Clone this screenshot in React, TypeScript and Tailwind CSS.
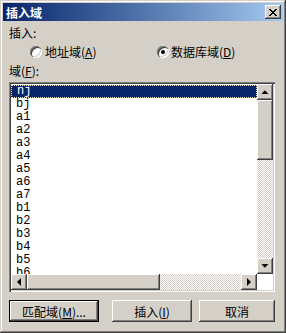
import React from "react";

const raised =
  "shadow-[inset_-1px_-1px_#404040,inset_1px_1px_#ffffff,inset_-2px_-2px_#808080,inset_2px_2px_#d4d0c8]";
const checker =
  "bg-[image:repeating-conic-gradient(#ffffff_0%_25%,#d4d0c8_0%_50%)] bg-[length:2px_2px]";

const items = ["nj", "bj", "a1", "a2", "a3", "a4", "a5", "a6", "a7", "b1", "b2", "b3", "b4", "b5", "b6"];

function Arrow({ dir }: { dir: "up" | "down" | "left" | "right" }) {
  const pts = {
    up: "0.5,4 3.5,0.5 4,0.5 7.5,4",
    down: "0.5,0 7.5,0 4,3.5 3.5,3.5",
    left: "4,0 4,8 0,4",
    right: "0,0 4,4 0,8",
  }[dir];
  const vertical = dir === "up" || dir === "down";
  return (
    <div className={`flex h-[16px] w-[16px] shrink-0 items-center justify-center bg-[#d4d0c8] ${raised}`}>
      <svg width={vertical ? 8 : 4} height={vertical ? 4 : 8} viewBox={vertical ? "0 0 8 4" : "0 0 4 8"}>
        <polygon points={pts} fill="#000" />
      </svg>
    </div>
  );
}

function Radio({ checked }: { checked?: boolean }) {
  return (
    <span className="relative flex h-[12px] w-[12px] shrink-0 items-center justify-center rounded-full bg-white shadow-[inset_1px_1px_#808080,inset_2px_2px_#404040,inset_-1px_-1px_#ffffff,inset_-2px_-2px_#d4d0c8]">
      {checked && <span className="h-[4px] w-[4px] rounded-full bg-black" />}
    </span>
  );
}

function Key({ k }: { k: string }) {
  return (
    <span>
      (<span className="underline underline-offset-1">{k}</span>)
    </span>
  );
}

function Button({ children, def, w }: { children: React.ReactNode; def?: boolean; w: string }) {
  return (
    <div className={`${w} h-[22px] ${def ? "border border-black" : ""}`}>
      <div className={`flex h-full w-full items-center justify-center bg-[#d4d0c8] ${raised}`}>{children}</div>
    </div>
  );
}

export default function App() {
  return (
    <div
      className="flex h-[333px] w-[286px] flex-col bg-[#d4d0c8] p-[3px] text-[12px] leading-[13px] text-black shadow-[inset_-1px_-1px_#404040,inset_1px_1px_#d4d0c8,inset_-2px_-2px_#808080,inset_2px_2px_#ffffff]"
      style={{ fontFamily: '"Noto Sans CJK SC", "Liberation Sans", sans-serif' }}
    >
      <div className="flex h-[18px] items-center justify-between bg-gradient-to-r from-[#0a246a] to-[#a6caf0] pl-[3px] pr-[2px]">
        <span className="text-[12px] font-bold text-white">插入域</span>
        <div className={`flex h-[14px] w-[16px] items-center justify-center bg-[#d4d0c8] ${raised}`}>
          <svg width="8" height="7" viewBox="0 0 8 7">
            <path d="M0 0h2v1h1v1h2V1h1V0h2v1H7v1H6v1H5v1h1v1h1v1h1v1H6V6H5V5H3v1H2v1H0V6h1V5h1V4h1V3H2V2H1V1H0z" fill="#000" />
          </svg>
        </div>
      </div>

      <div className="flex flex-1 flex-col pl-[6px] pr-[8px]">
        <div className="mt-[5px] h-[13px]">插入:</div>
        <div className="mt-[6px] flex h-[13px] items-center">
          <label className="ml-[21px] flex w-[127px] items-center gap-[3px]">
            <Radio />
            <span>
              地址域<Key k="A" />
            </span>
          </label>
          <label className="flex items-center gap-[2px]">
            <Radio checked />
            <span>
              数据库域<Key k="D" />
            </span>
          </label>
        </div>
        <div className="mt-[6px] h-[13px]">
          域<Key k="F" />:
        </div>

        <div className="mt-[5px] h-[210px] bg-white p-[2px] shadow-[inset_1px_1px_#808080,inset_2px_2px_#404040,inset_-1px_-1px_#ffffff,inset_-2px_-2px_#d4d0c8]">
          <div className="grid h-full grid-cols-[1fr_16px] grid-rows-[1fr_16px]">
            <div
              className="overflow-hidden pt-px text-[12px] leading-[13px]"
              style={{ fontFamily: '"Liberation Mono", monospace' }}
            >
              {items.map((it, i) => (
                <div
                  key={it}
                  className={`h-[13px] pl-[5px] ${
                    i === 0 ? "border border-dotted border-[#e8e8c0] bg-[#0a246a] pl-[4px] leading-[11px] text-white" : ""
                  }`}
                >
                  {it}
                </div>
              ))}
            </div>
            <div className="flex flex-col">
              <Arrow dir="up" />
              <div className={`h-[60px] bg-[#d4d0c8] ${raised}`} />
              <div className={`flex-1 ${checker}`} />
              <Arrow dir="down" />
            </div>
            <div className="flex">
              <Arrow dir="left" />
              <div className={`w-[133px] bg-[#d4d0c8] ${raised}`} />
              <div className={`flex-1 ${checker}`} />
              <Arrow dir="right" />
            </div>
            <div className="bg-white" />
          </div>
        </div>

        <div className="mt-[8px] flex items-center">
          <Button def w="w-[90px]">
            匹配域<Key k="M" />...
          </Button>
          <div className="ml-[13px]">
            <Button w="w-[80px]">
              插入<Key k="I" />
            </Button>
          </div>
          <div className="ml-[7px]">
            <Button w="w-[76px]">取消</Button>
          </div>
        </div>
      </div>
    </div>
  );
}
